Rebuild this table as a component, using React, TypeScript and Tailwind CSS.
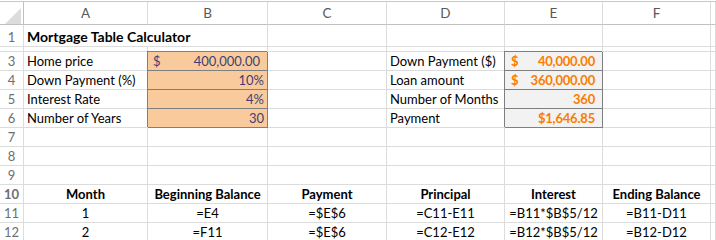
import React from 'react';

const font = { fontFamily: 'Lato, "Liberation Sans", sans-serif' };

const cols = 'grid grid-cols-[24px_124px_120px_119px_118px_98px_108px_1fr]';

type CellProps = {
    children?: React.ReactNode;
    className?: string;
};

// plain spreadsheet cell with light gridlines
const Cell: React.FC<CellProps> = ({ children, className = '' }) => (
    <div className={`flex items-end border-r border-b border-[#dcdcdc] leading-[18px] whitespace-nowrap overflow-visible ${className}`}>{children}</div>
);

// Excel "Input" style
const Input: React.FC<{ children: React.ReactNode }> = ({ children }) => (
    <div className="relative z-[1] flex items-end justify-end pr-[3px] border-r border-b border-[#7f7f7f] shadow-[-1px_-1px_0_0_#7f7f7f] bg-[#f9cb9c] text-[#3f3f76] leading-[18px]">{children}</div>
);

// Excel "Calculation" style
const Calc: React.FC<{ children: React.ReactNode }> = ({ children }) => (
    <div className="relative z-[1] flex items-end justify-end pr-[7px] border-r border-b border-[#7f7f7f] shadow-[-1px_-1px_0_0_#7f7f7f] bg-[#f2f2f2] text-[#fa7d00] font-bold leading-[18px] tracking-[-0.2px]">{children}</div>
);

const RowNum: React.FC<{ n?: string }> = ({ n }) => (
    <div className="flex items-end justify-center border-r border-b border-[#dcdcdc] text-[#6e6e6e] leading-[18px]">{n}</div>
);

const Empty = () => <Cell />;

export default function App() {
    const letters = ['A', 'B', 'C', 'D', 'E', 'F', ''];
    return (
        <div className="w-[716px] h-[240px] overflow-hidden bg-white pt-px text-[13px] text-black" style={font}>
            {/* column headers */}
            <div className={`${cols} h-[24px] border-t border-[#c8c8c8] text-[13.5px]`}>
                <div className="relative border-r border-b border-[#c0c0c0]">
                    <svg className="absolute left-[5px] top-[6px]" width="16" height="16" viewBox="0 0 16 16">
                        <polygon points="16,0 16,16 0,16" fill="#dcdcdc" />
                    </svg>
                </div>
                {letters.map((l, i) => (
                    <div key={i} className="flex items-center justify-center border-r border-b border-[#c0c0c0] border-r-[#dcdcdc] text-[#595959]">{l}</div>
                ))}
            </div>

            {/* row 1 */}
            <div className={`${cols} h-[22px]`}>
                <RowNum n="1" />
                <Cell className="col-span-2 pl-[3px] font-bold text-[14px]">Mortgage Table Calculator</Cell>
                <Empty /><Empty /><Empty /><Empty /><Empty />
            </div>

            {/* row 2 (hidden) */}
            <div className={`${cols} h-[5px]`}>
                <RowNum />
                <Empty /><Empty /><Empty /><Empty /><Empty /><Empty /><Empty />
            </div>

            {/* rows 3-6 */}
            <div className={`${cols} h-[19px]`}>
                <RowNum n="3" />
                <Cell className="pl-[3px]">Home price</Cell>
                <Input>
                    <span className="mr-auto pl-[5px]">$</span>
                    <span className="pr-[4px]">400,000.00</span>
                </Input>
                <Empty />
                <Cell className="pl-[3px]">Down Payment ($)</Cell>
                <Calc>
                    <span className="mr-auto pl-[6px]">$</span>
                    <span>40,000.00</span>
                </Calc>
                <Empty /><Empty />
            </div>
            <div className={`${cols} h-[19px]`}>
                <RowNum n="4" />
                <Cell className="pl-[3px]">Down Payment (%)</Cell>
                <Input>10%</Input>
                <Empty />
                <Cell className="pl-[3px]">Loan amount</Cell>
                <Calc>
                    <span className="mr-auto pl-[6px]">$</span>
                    <span>360,000.00</span>
                </Calc>
                <Empty /><Empty />
            </div>
            <div className={`${cols} h-[19px]`}>
                <RowNum n="5" />
                <Cell className="pl-[3px]">Interest Rate</Cell>
                <Input>4%</Input>
                <Empty />
                <Cell className="pl-[3px]">Number of Months</Cell>
                <Calc>360</Calc>
                <Empty /><Empty />
            </div>
            <div className={`${cols} h-[19px]`}>
                <RowNum n="6" />
                <Cell className="pl-[3px]">Number of Years</Cell>
                <Input>30</Input>
                <Empty />
                <Cell className="pl-[3px]">Payment</Cell>
                <Calc>$1,646.85</Calc>
                <Empty /><Empty />
            </div>

            {/* blank rows 7-9 */}
            {['7', '8', '9'].map((n) => (
                <div key={n} className={`${cols} h-[19px]`}>
                    <RowNum n={n} />
                    <Empty /><Empty /><Empty /><Empty /><Empty /><Empty /><Empty />
                </div>
            ))}

            {/* amortization table */}
            <div className={`${cols} h-[19px] font-bold`}>
                <RowNum n="10" />
                {['Month', 'Beginning Balance', 'Payment', 'Principal', 'Interest', 'Ending Balance'].map((h) => (
                    <Cell key={h} className="justify-center">{h}</Cell>
                ))}
                <Empty />
            </div>
            {[
                ['11', '1', '=E4', '=$E$6', '=C11-E11', '=B11*$B$5/12', '=B11-D11'],
                ['12', '2', '=F11', '=$E$6', '=C12-E12', '=B12*$B$5/12', '=B12-D12'],
            ].map(([n, ...cells]) => (
                <div key={n} className={`${cols} h-[19px]`}>
                    <RowNum n={n} />
                    {cells.map((c, i) => (
                        <Cell key={i} className="justify-center">{c}</Cell>
                    ))}
                    <Empty />
                </div>
            ))}
        </div>
    );
}
